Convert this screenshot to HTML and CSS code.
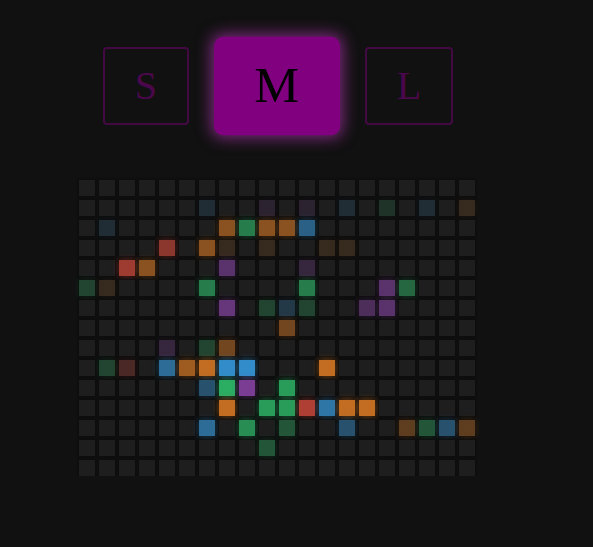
FILE: index.html
```html
<!DOCTYPE html>
<html lang="en">
<head>
<meta charset="utf-8">
<title>Grid</title>
<link rel="stylesheet" href="styles.css">
</head>
<body>
<div class="app">
  <div class="sizes">
    <button class="size">S</button>
    <button class="size active">M</button>
    <button class="size">L</button>
  </div>
  <div class="grid">
    <i class="c"></i><i class="c"></i><i class="c"></i><i class="c"></i><i class="c"></i><i class="c"></i><i class="c"></i><i class="c"></i><i class="c"></i><i class="c"></i><i class="c"></i><i class="c"></i><i class="c"></i><i class="c"></i><i class="c"></i><i class="c"></i><i class="c"></i><i class="c"></i><i class="c"></i><i class="c"></i>
    <i class="c"></i><i class="c"></i><i class="c"></i><i class="c"></i><i class="c"></i><i class="c"></i><i class="c b a1"></i><i class="c"></i><i class="c"></i><i class="c p a1"></i><i class="c"></i><i class="c p a1"></i><i class="c"></i><i class="c b a1"></i><i class="c"></i><i class="c g a1"></i><i class="c"></i><i class="c b a1"></i><i class="c"></i><i class="c o a1"></i>
    <i class="c"></i><i class="c b a1"></i><i class="c"></i><i class="c"></i><i class="c"></i><i class="c"></i><i class="c"></i><i class="c o a5"></i><i class="c g a5"></i><i class="c o a5"></i><i class="c o a5"></i><i class="c b a5"></i><i class="c"></i><i class="c"></i><i class="c"></i><i class="c"></i><i class="c"></i><i class="c"></i><i class="c"></i><i class="c"></i>
    <i class="c"></i><i class="c"></i><i class="c"></i><i class="c"></i><i class="c r a5"></i><i class="c"></i><i class="c o a5"></i><i class="c o a1"></i><i class="c"></i><i class="c o a1"></i><i class="c"></i><i class="c"></i><i class="c o a1"></i><i class="c o a1"></i><i class="c"></i><i class="c"></i><i class="c"></i><i class="c"></i><i class="c"></i><i class="c"></i>
    <i class="c"></i><i class="c"></i><i class="c r a6"></i><i class="c o a5"></i><i class="c"></i><i class="c"></i><i class="c"></i><i class="c p a5"></i><i class="c"></i><i class="c"></i><i class="c"></i><i class="c p a2"></i><i class="c"></i><i class="c"></i><i class="c"></i><i class="c"></i><i class="c"></i><i class="c"></i><i class="c"></i><i class="c"></i>
    <i class="c g a2"></i><i class="c o a1"></i><i class="c"></i><i class="c"></i><i class="c"></i><i class="c"></i><i class="c g a5"></i><i class="c"></i><i class="c"></i><i class="c"></i><i class="c"></i><i class="c g a5"></i><i class="c"></i><i class="c"></i><i class="c"></i><i class="c p a5"></i><i class="c g a4"></i><i class="c"></i><i class="c"></i><i class="c"></i>
    <i class="c"></i><i class="c"></i><i class="c"></i><i class="c"></i><i class="c"></i><i class="c"></i><i class="c"></i><i class="c p a6"></i><i class="c"></i><i class="c g a2"></i><i class="c b a2"></i><i class="c g a2"></i><i class="c"></i><i class="c"></i><i class="c p a4"></i><i class="c p a5"></i><i class="c"></i><i class="c"></i><i class="c"></i><i class="c"></i>
    <i class="c"></i><i class="c"></i><i class="c"></i><i class="c"></i><i class="c"></i><i class="c"></i><i class="c"></i><i class="c"></i><i class="c"></i><i class="c"></i><i class="c o a4"></i><i class="c"></i><i class="c"></i><i class="c"></i><i class="c"></i><i class="c"></i><i class="c"></i><i class="c"></i><i class="c"></i><i class="c"></i>
    <i class="c"></i><i class="c"></i><i class="c"></i><i class="c"></i><i class="c p a2"></i><i class="c"></i><i class="c g a2"></i><i class="c o a4"></i><i class="c"></i><i class="c"></i><i class="c"></i><i class="c"></i><i class="c"></i><i class="c"></i><i class="c"></i><i class="c"></i><i class="c"></i><i class="c"></i><i class="c"></i><i class="c"></i>
    <i class="c"></i><i class="c g a2"></i><i class="c r a2"></i><i class="c"></i><i class="c b a6"></i><i class="c o a6"></i><i class="c o a8"></i><i class="c b a9"></i><i class="c b a9"></i><i class="c"></i><i class="c"></i><i class="c"></i><i class="c o a8"></i><i class="c"></i><i class="c"></i><i class="c"></i><i class="c"></i><i class="c"></i><i class="c"></i><i class="c"></i>
    <i class="c"></i><i class="c"></i><i class="c"></i><i class="c"></i><i class="c"></i><i class="c"></i><i class="c b a4"></i><i class="c g a8"></i><i class="c p a8"></i><i class="c"></i><i class="c g a7"></i><i class="c"></i><i class="c"></i><i class="c"></i><i class="c"></i><i class="c"></i><i class="c"></i><i class="c"></i><i class="c"></i><i class="c"></i>
    <i class="c"></i><i class="c"></i><i class="c"></i><i class="c"></i><i class="c"></i><i class="c"></i><i class="c"></i><i class="c o a8"></i><i class="c"></i><i class="c g a7"></i><i class="c g a7"></i><i class="c r a7"></i><i class="c b a7"></i><i class="c o a8"></i><i class="c o a8"></i><i class="c"></i><i class="c"></i><i class="c"></i><i class="c"></i><i class="c"></i>
    <i class="c"></i><i class="c"></i><i class="c"></i><i class="c"></i><i class="c"></i><i class="c"></i><i class="c b a6"></i><i class="c"></i><i class="c g a6"></i><i class="c"></i><i class="c g a3"></i><i class="c"></i><i class="c"></i><i class="c b a4"></i><i class="c"></i><i class="c"></i><i class="c o a3"></i><i class="c g a3"></i><i class="c b a4"></i><i class="c o a3"></i>
    <i class="c"></i><i class="c"></i><i class="c"></i><i class="c"></i><i class="c"></i><i class="c"></i><i class="c"></i><i class="c"></i><i class="c"></i><i class="c g a3"></i><i class="c"></i><i class="c"></i><i class="c"></i><i class="c"></i><i class="c"></i><i class="c"></i><i class="c"></i><i class="c"></i><i class="c"></i><i class="c"></i>
    <i class="c"></i><i class="c"></i><i class="c"></i><i class="c"></i><i class="c"></i><i class="c"></i><i class="c"></i><i class="c"></i><i class="c"></i><i class="c"></i><i class="c"></i><i class="c"></i><i class="c"></i><i class="c"></i><i class="c"></i><i class="c"></i><i class="c"></i><i class="c"></i><i class="c"></i><i class="c"></i>
  </div>
</div>
</body>
</html>
```

FILE: styles.css
```css
html, body {
  margin: 0;
  padding: 0;
  background: #111111;
}

body {
  font-family: "Liberation Serif", "Times New Roman", serif;
}

.app {
  width: 554px;
  display: flex;
  flex-direction: column;
  align-items: center;
  padding-top: 47px;
}

.sizes {
  display: flex;
  align-items: center;
  gap: 38px;
  margin-left: 2px;
}

.size {
  font-family: "Liberation Serif", "Times New Roman", serif;
  font-size: 40px;
  line-height: 46px;
  padding: 14px 30px;
  border: 2px solid rgba(128, 0, 128, 0.45);
  border-radius: 4px;
  background: transparent;
  color: rgba(128, 0, 128, 0.55);
  margin: 0;
}

.size.active {
  background: #800080;
  border-color: #800080;
  color: #000000;
  transform: scale(1.26);
  border-radius: 7px;
  box-shadow: 0 0 12px 2px rgba(170, 50, 170, 0.7);
}

.grid {
  margin-top: 55px;
  display: grid;
  grid-template-columns: repeat(20, 16px);
  grid-auto-rows: 16px;
  gap: 4px;
}

.c {
  display: block;
  --c: 0, 0, 0;
  --a: 0;
  background: linear-gradient(rgba(var(--c), var(--a)), rgba(var(--c), var(--a))), #1e1e1e;
  box-shadow: 0 0 2px 1px rgba(0, 0, 0, 0.35), 0 0 6px rgba(var(--c), calc(var(--a) * 0.8));
}

.o { --c: 230, 126, 34; }
.g { --c: 46, 204, 113; }
.b { --c: 52, 152, 219; }
.p { --c: 142, 68, 173; }
.r { --c: 231, 76, 60; }

.a1 { --a: 0.12; }
.a2 { --a: 0.22; }
.a3 { --a: 0.32; }
.a4 { --a: 0.42; }
.a5 { --a: 0.54; }
.a6 { --a: 0.64; }
.a7 { --a: 0.72; }
.a8 { --a: 0.82; }
.a9 { --a: 0.9; }
```
